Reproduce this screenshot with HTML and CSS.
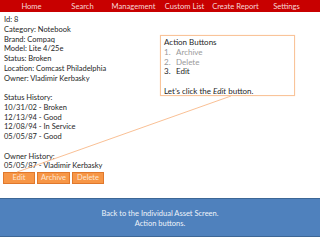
FILE: index.html
```html
<!DOCTYPE html>
<html>
<head>
<meta charset="utf-8">
<link rel="stylesheet" href="styles.css">
</head>
<body>
<div class="page">
  <nav class="nav">
    <span>Home</span><span>Search</span><span>Management</span><span>Custom List</span><span>Create Report</span><span>Settings</span>
  </nav>
  <div class="details">
    <div>Id: 8</div>
    <div>Category: Notebook</div>
    <div>Brand: Compaq</div>
    <div>Model: Lite 4/25e</div>
    <div>Status: Broken</div>
    <div>Location: Comcast Philadelphia</div>
    <div>Owner: Vladimir Kerbasky</div>
    <div class="blank"></div>
    <div>Status History:</div>
    <div>10/31/02 - Broken</div>
    <div>12/13/94 - Good</div>
    <div>12/08/94 - In Service</div>
    <div>05/05/87 - Good</div>
    <div class="blank"></div>
    <div>Owner History:</div>
    <div>05/05/87 - Vladimir Kerbasky</div>
  </div>
  <div class="actions">
    <span class="btn btn-edit">Edit</span><span class="btn btn-archive">Archive</span><span class="btn btn-delete">Delete</span>
  </div>
  <div class="banner">
    <div>Back to the Individual Asset Screen.</div>
    <div>Action buttons.</div>
  </div>
  <svg class="pointer" width="320" height="240" viewBox="0 0 320 240">
    <line x1="231" y1="96" x2="17" y2="172" stroke="#f7b07a" stroke-width="0.8"/>
  </svg>
  <div class="callout">
    <div>Action Buttons</div>
    <ol class="steps">
      <li class="done">Archive</li>
      <li class="done">Delete</li>
      <li>Edit</li>
    </ol>
    <div class="blank"></div>
    <div>Let’s click the <em>Edit</em> button.</div>
  </div>
</div>
</body>
</html>
```
FILE: styles.css
```css
html, body {
  margin: 0;
  padding: 0;
  background: #ffffff;
}
.page {
  position: relative;
  width: 320px;
  height: 240px;
  overflow: hidden;
  font-family: Lato, "Open Sans", sans-serif;
  font-size: 7.5px;
  line-height: 9.75px;
  color: #262626;
}
.nav {
  display: grid;
  grid-template-columns: repeat(6, 51px);
  padding-left: 6px;
  height: 12px;
  background: #c80000;
  color: #f6d6d6;
  align-items: center;
  justify-items: center;
  font-size: 7.6px;
  line-height: 12px;
}
.details {
  padding: 3px 0 0 4px;
}
.blank {
  height: 9.75px;
}
.actions {
  display: flex;
  gap: 2px;
  padding: 1px 0 0 3px;
}
.btn {
  display: flex;
  align-items: center;
  justify-content: center;
  height: 10px;
  background: #f79646;
  border: 1px solid #e0782c;
  color: #fde6d4;
  font-size: 7.5px;
  line-height: 10px;
}
.btn-edit { width: 30px; }
.btn-archive { width: 31px; }
.btn-delete { width: 30px; }
.banner {
  margin-top: 14px;
  height: 39px;
  padding-top: 2px;
  box-sizing: border-box;
  background: #4f81bd;
  border-top: 1px solid #3d6796;
  border-bottom: 1px solid #3d6796;
  color: #eef3fa;
  display: flex;
  flex-direction: column;
  justify-content: center;
  align-items: center;
  line-height: 10px;
}
.pointer {
  position: absolute;
  left: 0;
  top: 0;
}
.callout {
  position: absolute;
  left: 160px;
  top: 35px;
  width: 130px;
  height: 57px;
  padding: 2px 0 0 3px;
  background: #ffffff;
  border: 1px solid #f9c49a;
  box-shadow: 0 0 1px #fbd9bd;
  font-size: 8px;
}
.steps {
  margin: 0;
  padding: 0;
  list-style: none;
  counter-reset: step;
}
.steps li {
  display: flex;
  counter-increment: step;
}
.steps li::before {
  content: counter(step) ".";
  width: 12px;
  flex: none;
}
.steps li.done {
  color: #9a9a9a;
}
.callout em {
  font-style: italic;
}
```
